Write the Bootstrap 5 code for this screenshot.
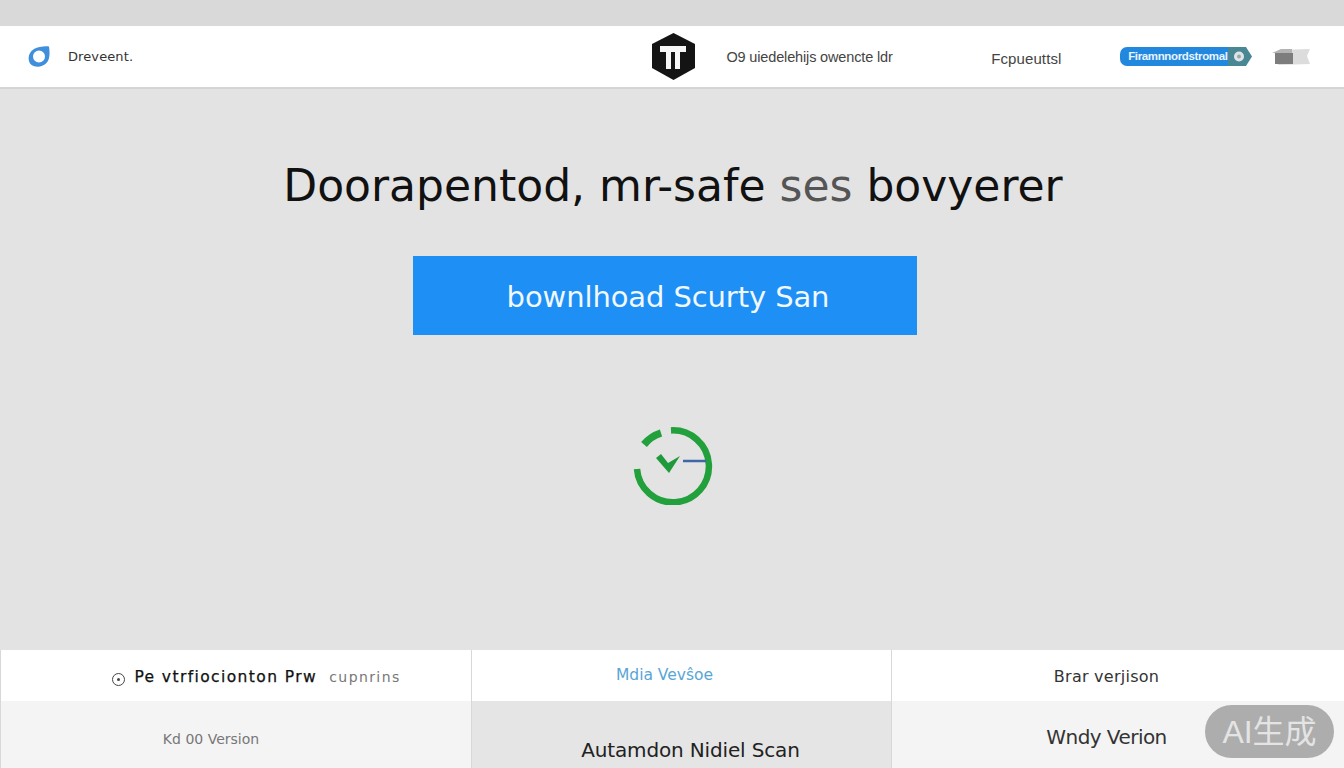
<!DOCTYPE html>
<html lang="en">
<head>
<meta charset="utf-8">
<title>Download</title>
<link href="https://cdn.jsdelivr.net/npm/bootstrap@5.3.0/dist/css/bootstrap.min.css" rel="stylesheet">
<style>
html,body{height:768px;overflow:hidden}
body{background:#e3e3e3;font-family:"Liberation Sans",sans-serif;color:#222}
.shell{height:768px}
.topstrip{height:26px;background:#d9d9d9}
.topnav{height:63px;background:#fff;border-bottom:2px solid #d5d5d5;padding:0 34px 0 28px}
.brandtext{font-family:"DejaVu Sans",sans-serif;font-size:13px;margin-left:18px;color:#333;letter-spacing:.1px}
.navleft{width:624px}
.hexslot{width:75px}
.navlink1{font-family:"Liberation Sans",sans-serif;font-size:14.5px;color:#444;width:265px;letter-spacing:-.15px;padding-top:3px}
.navlink2{font-family:"Liberation Sans",sans-serif;font-size:15px;color:#444;width:129px;padding-top:5px;letter-spacing:.1px}
.pillbtn{width:132px;height:19px;color:#e8f4ff;font-size:11.500px;font-weight:700;white-space:nowrap}
.pilltext{flex:1 1 auto;height:19px;background:#2288de;border-radius:7px 0 0 7px;padding-left:8px;letter-spacing:-.35px;line-height:19px;overflow:hidden}
.graybox{margin-left:20px}
.hero{flex:1 1 auto}
.headline{font-family:"DejaVu Sans",sans-serif;font-size:44px;font-weight:400;color:#111;margin:69px 0 0 2px;line-height:56px;white-space:nowrap}
.fade1{color:#555}
.ctabtn{width:504px;height:79px;margin:42px 14px 0 0;background:#1e8ff5;border:0;border-radius:0;color:#f1f8ff;font-family:"DejaVu Sans",sans-serif;font-size:29px;letter-spacing:-.1px;padding:4px 0 0 6px}
.ctabtn:hover{background:#1e8ff5;color:#f1f8ff}
.ringicon{margin-top:92px;margin-left:2px}
.tablegrid{display:grid;grid-template-columns:471px 420px 453px;grid-template-rows:51px 67px;flex:0 0 auto}
.cellx{display:flex;align-items:center;justify-content:center;border-left:1px solid #d8d8d8;background:#fff;white-space:nowrap}
.soft{background:#f4f4f4}
.mid{background:#e5e5e5}
.t1{font-family:"DejaVu Sans",sans-serif;font-size:15.500px;font-weight:500;color:#111;letter-spacing:1.4px;margin-left:41px;padding-top:5px;-webkit-text-stroke:.25px #111}
.t1 span{color:#777;font-weight:400;font-size:14px;-webkit-text-stroke:0}
.dotmark{width:13px;height:13px;border:1.5px solid #444;border-radius:50%;margin-right:9px;display:inline-flex;align-items:center;justify-content:center;vertical-align:1px}
.dotmark i{width:3px;height:3px;background:#444;border-radius:50%;display:block}
.t2{font-family:"DejaVu Sans",sans-serif;font-size:15.500px;color:#58a6d6;margin-right:34px}
.t3{font-family:"DejaVu Sans",sans-serif;font-size:16px;color:#333;letter-spacing:.25px;margin:0 19px 0 -4px;padding-top:3px}
.t4{font-family:"DejaVu Sans",sans-serif;font-size:14px;color:#777;padding-top:10px;margin:0 40px 0 -10px}
.t5{font-family:"DejaVu Sans",sans-serif;font-size:20px;color:#222;letter-spacing:-.15px;padding-top:30px;margin-left:18px}
.t6{font-family:"DejaVu Sans",sans-serif;font-size:20px;color:#333;letter-spacing:-.55px;padding-top:4px;margin:0 17px 0 -6px}
.aimark{position:absolute;left:1205px;top:705px;width:129px;height:53px;border-radius:27px;background:rgba(150,150,150,.75);color:#e4e4e4;font-family:"Liberation Sans","Noto Sans CJK SC",sans-serif;font-size:32px;display:flex;align-items:center;justify-content:center}
</style>
</head>
<body>
<div class="shell d-flex flex-column">
  <div class="topstrip"></div>
  <nav class="topnav d-flex align-items-center">
    <div class="navleft d-flex align-items-center">
      <svg width="22" height="21" viewBox="0 0 22 21"><path fill-rule="evenodd" fill="#3f8fdc" d="M21 .5C22 7 22 14 18 17.500C14 21.500 6 22 2 17.500C-1 12 1 6 6 3C10 1 16 0 21 .5ZM11 4.500A6 6 0 1 0 11 16.500A6 6 0 1 0 11 4.500Z"/></svg>
      <span class="brandtext">Dreveent.</span>
    </div>
    <div class="hexslot d-flex">
      <svg width="43" height="47" viewBox="0 0 43 47"><polygon fill="#141414" points="21.500,0 43,11 43,35 21.500,47 0,35 0,11"/><path fill="#f6f6f6" d="M8 13H34V19H28V36H23V19H19V36H14V19H8Z"/></svg>
    </div>
    <span class="navlink1">O9 uiedelehijs owencte ldr</span>
    <span class="navlink2">Fcpueuttsl</span>
    <div class="pillbtn d-flex align-items-center"><span class="pilltext">Firamnnordstromal</span><svg width="24" height="19" viewBox="0 0 24 19"><polygon fill="#4a8794" points="0,0 18,0 24,9.500 18,19 0,19"/><circle cx="11" cy="9.500" r="5" fill="#dfe4e6"/><circle cx="11" cy="9.500" r="2" fill="#9aa6aa"/></svg></div>
    <svg class="graybox" width="38" height="16" viewBox="0 0 38 16"><path fill="#dcdcdc" d="M6 1L38 0L35 7L38 15L6 16Z"/><path fill="#7d7d7d" d="M3 4H21V15H3Z"/><path fill="#b4b4b4" d="M0 4L9 0H20V4Z"/></svg>
  </nav>
  <main class="hero d-flex flex-column align-items-center">
    <h1 class="headline">Doorapentod, mr-safe <span class="fade1">ses</span> bovyerer</h1>
    <button type="button" class="btn ctabtn">bownlhoad Scurty San</button>
    <svg class="ringicon" width="80" height="78" viewBox="0 0 80 78">
      <g fill="none" stroke="#22a03c">
        <path d="M38 3.400A36 36 0 1 1 4 42" stroke-width="6.500"/>
        <path d="M11 17.500A36 36 0 0 1 28 6" stroke-width="7.500"/>
      </g>
      <polygon fill="#1f9a3a" points="23,31 28,27 35,36 47,29 36,46"/>
      <path d="M50 34H73" fill="none" stroke="#3f67a8" stroke-width="2.500"/>
    </svg>
  </main>
  <section class="tablegrid">
    <div class="cellx"><span class="t1"><span class="dotmark"><i></i></span>Pe vtrfiocionton Prw <span>&nbsp;cupnrins</span></span></div>
    <div class="cellx"><span class="t2">Mdia Vevŝoe</span></div>
    <div class="cellx"><span class="t3">Brar verjison</span></div>
    <div class="cellx soft"><span class="t4">Kd 00 Version</span></div>
    <div class="cellx mid"><span class="t5">Autamdon Nidiel Scan</span></div>
    <div class="cellx soft"><span class="t6">Wndy Verion</span></div>
  </section>
</div>
<div class="aimark">AI生成</div>
<script src="https://cdn.jsdelivr.net/npm/bootstrap@5.3.0/dist/js/bootstrap.bundle.min.js"></script>
</body>
</html>
